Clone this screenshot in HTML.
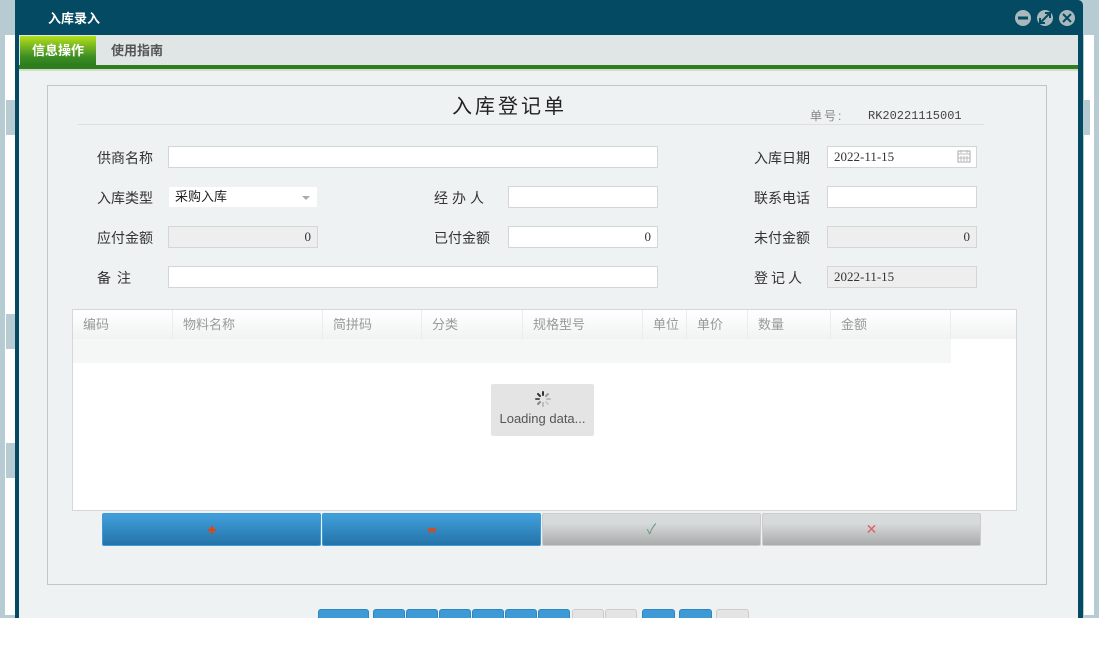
<!DOCTYPE html>
<html><head><meta charset="utf-8"><style>
*{margin:0;padding:0;box-sizing:border-box}
body{width:1099px;height:655px;background:#fff;position:relative;overflow:hidden;font-family:"Liberation Sans","Noto Sans CJK SC",sans-serif;font-size:14px;color:#333}
.a{position:absolute}
.lbl{position:absolute;font-size:14px;color:#333;line-height:20px}
.in{position:absolute;height:22px;background:#fff;border:1px solid #d3d6d8;font-family:"Liberation Serif","Noto Serif CJK SC",serif;font-size:13px;line-height:20px;padding:0 6px}
.ro{background:#eeeeee}
.r{text-align:right}
.th{position:absolute;top:0;height:29px;line-height:29px;font-size:13px;color:#999;padding-left:10px;border-right:1px solid #ececec}
.pg{position:absolute;top:609px;height:10px;border-radius:3px 3px 0 0;background:#3d9ad6;border:1px solid #2f85c0}
.pg.g{background:#e4e4e4;border-color:#ccc}
</style></head><body>
<div class="a" style="left:0;top:0;width:1099px;height:618px;background:#b7cbd3"></div>
<div class="a" style="left:5px;top:35px;width:12px;height:580px;background:#fff"></div>
<div class="a" style="left:1084px;top:35px;width:10px;height:580px;background:#fff"></div>
<div class="a" style="left:1084px;top:100px;width:6px;height:35px;background:#b7cbd3"></div>
<div class="a" style="left:6px;top:100px;width:10px;height:35px;background:#b7cbd3"></div>
<div class="a" style="left:6px;top:314px;width:10px;height:35px;background:#b7cbd3"></div>
<div class="a" style="left:6px;top:443px;width:10px;height:35px;background:#b7cbd3"></div>
<div class="a" style="left:15px;top:0;width:1068px;height:618px;background:#044a62;border-radius:0 5px 0 0"></div>
<div class="a" style="left:48px;top:10px;color:#fff;font-weight:bold;font-size:13px;line-height:18px">入库录入</div>
<svg class="a" style="left:1014px;top:9px" width="64" height="18">
<circle cx="9" cy="9" r="8" fill="#a9b8bd"/><rect x="4" y="7.5" width="10" height="3" fill="#044a62"/>
<circle cx="31" cy="9" r="8" fill="#a9b8bd"/><path d="M26 14 L36 4 M31 4h5v5 M26 9v5h5" stroke="#044a62" stroke-width="2" fill="none"/>
<circle cx="53" cy="9" r="8" fill="#a9b8bd"/><path d="M49 5 L57 13 M57 5 L49 13" stroke="#044a62" stroke-width="2"/>
</svg>
<div class="a" style="left:19px;top:35px;width:1059px;height:583px;background:#eef2f3"></div>
<div class="a" style="left:19px;top:35px;width:1059px;height:30px;background:#e0e6e6"></div>
<div class="a" style="left:20px;top:36px;width:76px;height:29px;background:linear-gradient(#b4e01c,#3e8f25 70%,#2e7d1e);color:#fff;font-weight:bold;font-size:13px;line-height:29px;text-align:center">信息操作</div>
<div class="a" style="left:111px;top:36px;color:#555;font-weight:bold;font-size:13px;line-height:29px">使用指南</div>
<div class="a" style="left:19px;top:65px;width:1059px;height:4px;background:#2f7d1f"></div>
<div class="a" style="left:19px;top:69px;width:1059px;height:2px;background:#cfe0c8"></div>
<div class="a" style="left:47px;top:85px;width:1000px;height:500px;border:1px solid #c3c6c7"></div>
<div class="a" style="left:78px;top:124px;width:906px;height:1px;background:#dde0e1"></div>
<div class="a" style="left:0;top:94px;width:1019px;text-align:center;font-size:20px;letter-spacing:3px;color:#222;line-height:26px">入库登记单</div>
<div class="a" style="left:810px;top:108px;font-size:12px;color:#888;letter-spacing:2px;line-height:16px">单号:</div>
<div class="a" style="left:868px;top:108px;font-size:12px;color:#444;font-family:'Liberation Mono',monospace;line-height:16px">RK20221115001</div>
<div class="lbl" style="left:97px;top:148px">供商名称</div>
<div class="in" style="left:168px;top:146px;width:490px"></div>
<div class="lbl" style="left:754px;top:148px">入库日期</div>
<div class="in" style="left:827px;top:146px;width:150px">2022-11-15</div>
<svg class="a" style="left:957px;top:149px" width="14" height="14"><rect x="1" y="2" width="12" height="11" fill="none" stroke="#aaa"/><path d="M1 5h12M4 1v3M10 1v3M4 7v5M7 7v5M10 7v5M1 9h12" stroke="#bbb"/></svg>
<div class="lbl" style="left:97px;top:188px">入库类型</div>
<div class="in" style="left:168px;top:186px;width:150px;font-family:'Liberation Sans','Noto Sans CJK SC',sans-serif;border-color:#eef2f3;color:#222">采购入库</div>
<div class="a" style="left:302px;top:196px;border:4px solid transparent;border-top:4px solid #aaa"></div>
<div class="lbl" style="left:434px;top:188px;letter-spacing:4px">经办人</div>
<div class="in" style="left:508px;top:186px;width:150px"></div>
<div class="lbl" style="left:754px;top:188px">联系电话</div>
<div class="in" style="left:827px;top:186px;width:150px"></div>
<div class="lbl" style="left:97px;top:228px">应付金额</div>
<div class="in ro r" style="left:168px;top:226px;width:150px">0</div>
<div class="lbl" style="left:434px;top:228px">已付金额</div>
<div class="in r" style="left:508px;top:226px;width:150px">0</div>
<div class="lbl" style="left:754px;top:228px">未付金额</div>
<div class="in ro r" style="left:827px;top:226px;width:150px">0</div>
<div class="lbl" style="left:97px;top:268px;letter-spacing:6px">备注</div>
<div class="in" style="left:168px;top:266px;width:490px"></div>
<div class="lbl" style="left:754px;top:268px;letter-spacing:3px">登记人</div>
<div class="in ro" style="left:827px;top:266px;width:150px">2022-11-15</div>
<div class="a" style="left:72px;top:309px;width:945px;height:202px;background:#fff;border:1px solid #d5d8d9">
<div class="a" style="left:0;top:0;width:943px;height:29px;background:linear-gradient(#fff,#f1f3f3)"></div>
<div class="a" style="left:0;top:29px;width:878px;height:24px;background:#f5f7f7"></div>
<div class="th" style="left:0;width:100px">编码</div>
<div class="th" style="left:100px;width:150px">物料名称</div>
<div class="th" style="left:250px;width:99px">简拼码</div>
<div class="th" style="left:349px;width:101px">分类</div>
<div class="th" style="left:450px;width:120px">规格型号</div>
<div class="th" style="left:570px;width:44px">单位</div>
<div class="th" style="left:614px;width:61px">单价</div>
<div class="th" style="left:675px;width:83px">数量</div>
<div class="th" style="left:758px;width:120px">金额</div>
</div>
<div class="a" style="left:491px;top:384px;width:103px;height:52px;background:#e4e4e4;border-radius:2px;text-align:center;color:#555;font-size:13px">
<svg width="16" height="16" style="margin-top:7px" viewBox="0 0 16 16"><g stroke-width="2" stroke-linecap="round"><path d="M8 1v3" stroke="#333"/><path d="M13 3l-2 2" stroke="#999"/><path d="M15 8h-3" stroke="#bbb"/><path d="M13 13l-2-2" stroke="#ccc"/><path d="M8 15v-3" stroke="#bbb"/><path d="M3 13l2-2" stroke="#888"/><path d="M1 8h3" stroke="#555"/><path d="M3 3l2 2" stroke="#333"/></g></svg>
<div style="line-height:14px;margin-top:2px">Loading data...</div></div>
<div class="a" style="left:102px;top:513px;width:219px;height:33px;background:linear-gradient(#41a0dc,#2473a8);border:1px solid #3d9ad6;border-radius:2px"><svg class="a" style="left:104px;top:11px" width="10" height="10"><path d="M5 1v8M1 5h8" stroke="#f04000" stroke-width="2"/></svg></div>
<div class="a" style="left:322px;top:513px;width:219px;height:33px;background:linear-gradient(#41a0dc,#2473a8);border:1px solid #3d9ad6;border-radius:2px"><svg class="a" style="left:104px;top:11px" width="10" height="10"><path d="M1 4h8M1 6.5h8" stroke="#f04000" stroke-width="1.6"/></svg></div>
<div class="a" style="left:542px;top:513px;width:219px;height:33px;background:linear-gradient(#d7dadb 30%,#a9abab);border:1px solid #ccc;border-radius:2px;color:#6a9a7a;text-align:center;line-height:31px">✓</div>
<div class="a" style="left:762px;top:513px;width:219px;height:33px;background:linear-gradient(#d7dadb 30%,#a9abab);border:1px solid #ccc;border-radius:2px;color:#e06060;text-align:center;line-height:31px">✕</div>
<div class="pg" style="left:318px;width:51px"></div>
<div class="pg" style="left:373px;width:32px"></div>
<div class="pg" style="left:406px;width:32px"></div>
<div class="pg" style="left:439px;width:32px"></div>
<div class="pg" style="left:472px;width:32px"></div>
<div class="pg" style="left:505px;width:32px"></div>
<div class="pg" style="left:538px;width:32px"></div>
<div class="pg g" style="left:572px;width:32px"></div>
<div class="pg g" style="left:605px;width:32px"></div>
<div class="pg" style="left:642px;width:33px"></div>
<div class="pg" style="left:679px;width:33px"></div>
<div class="pg g" style="left:716px;width:33px"></div>
<div class="a" style="left:0;top:618px;width:1099px;height:37px;background:#fff"></div>
</body></html>
